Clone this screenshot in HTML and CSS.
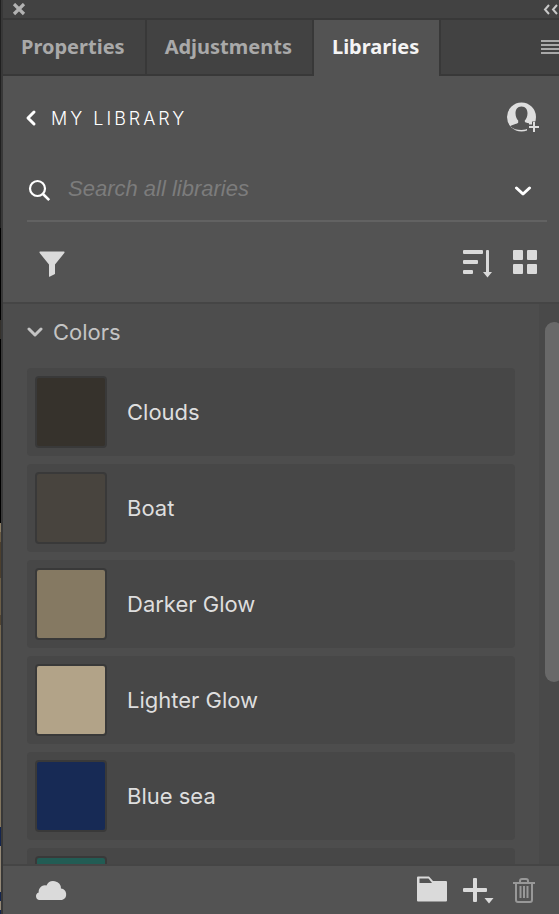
FILE: index.html
```html
<!DOCTYPE html>
<html lang="en">
<head>
<meta charset="utf-8">
<meta name="viewport" content="width=device-width, initial-scale=1">
<title>Libraries</title>
<link rel="stylesheet" href="styles.css">
</head>
<body>
<div class="workspace">
  <div class="canvas-edge"></div>
  <main class="panel">
    <div class="titlebar">
      <button class="icon-btn" type="button" aria-label="Close panel">
        <svg width="14" height="14" viewBox="0 0 14 14"><path d="M2 1l10 10M12 1L2 11" stroke="#b2b2b2" stroke-width="3.200" fill="none"/></svg>
      </button>
      <button class="icon-btn collapse" type="button" aria-label="Collapse panel">
        <svg width="16" height="12" viewBox="0 0 16 12"><path d="M6 1L2 5.500l4 4.500M14 1l-4 4.500 4 4.500" stroke="#c8c8c8" stroke-width="2" fill="none"/></svg>
      </button>
    </div>
    <nav class="tabs">
      <button class="tab" type="button">Properties</button>
      <button class="tab" type="button">Adjustments</button>
      <button class="tab tab-active" type="button">Libraries</button>
      <div class="tabs-rest">
        <button class="icon-btn" type="button" aria-label="Panel menu">
          <svg width="18" height="14" viewBox="0 0 18 14"><path d="M0 1h18M0 5h18M0 9h18M0 13h18" stroke="#a9a9a9" stroke-width="2"/></svg>
        </button>
      </div>
    </nav>
    <header class="library-head">
      <div class="library-row">
        <button class="back" type="button">
          <svg width="12" height="18" viewBox="0 0 12 18"><path d="M9 3L3 9l6 6" stroke="#fff" stroke-width="3" stroke-linecap="round" stroke-linejoin="round" fill="none"/></svg>
          <span>MY LIBRARY</span>
        </button>
        <button class="icon-btn" type="button" aria-label="Invite people">
          <svg width="34" height="32" viewBox="0 0 34 32">
            <circle cx="16.500" cy="15" r="14.500" fill="#dedede"/>
            <path d="M16.500 4.500c-4.200 0-6 3.200-6 6.800 0 3.200 1.200 5.700 2.700 7.300v1.800c0 1.400-5 1.600-8 3.800C8 27 12 28 16.500 28c3 0 5.400-.8 7.500-2.200v-4.500c-2.200-.6-4.200-.6-4.200-1.800v-1c1.500-1.600 2.700-4.100 2.700-7.300 0-3.600-1.800-6.700-6-6.700z" fill="#535353"/>
            <path d="M22 22.500h5v-3h5v12H22z" fill="#535353"/>
            <path d="M29 20v10M24 25h10" stroke="#dedede" stroke-width="2"/>
          </svg>
        </button>
      </div>
      <form class="search">
        <label for="library-search" aria-label="Search all libraries">
          <svg width="24" height="24" viewBox="0 0 24 24"><circle cx="10.500" cy="10.500" r="7.500" stroke="#fff" stroke-width="2.200" fill="none"/><path d="M16 16l6.200 6.200" stroke="#fff" stroke-width="2.600" fill="none"/></svg>
        </label>
        <input id="library-search" type="text" placeholder="Search all libraries">
        <button class="icon-btn" type="button" aria-label="Search scope">
          <svg width="18" height="12" viewBox="0 0 18 12"><path d="M2.500 4L9 10l6.500-6" stroke="#fff" stroke-width="3" stroke-linecap="round" stroke-linejoin="round" fill="none"/></svg>
        </button>
      </form>
      <div class="tools">
        <button class="icon-btn filter" type="button" aria-label="Filter">
          <svg width="26" height="26" viewBox="0 0 26 26"><path d="M.5 1Q.5.500 1 .500h24q.5 0 .5.500v.8L16 13.500v9.500l-5.500 2.700q-.5 0-.5-.5V13.500L.5 1.800z" fill="#dadada"/></svg>
        </button>
        <button class="icon-btn" type="button" aria-label="Sort">
          <svg width="30" height="28" viewBox="0 0 30 28" fill="#dadada"><rect x="0" y="0" width="20" height="4" rx="1"/><rect x="0" y="10" width="15" height="4" rx="1"/><rect x="0" y="20" width="10" height="4" rx="1"/><path d="M23 1q0-1 1-1h1q1 0 1 1v21h3l-4.500 5.500L20 22h3z"/></svg>
        </button>
        <button class="icon-btn" type="button" aria-label="Grid view">
          <svg width="24" height="28" viewBox="0 0 24 28" fill="#dadada"><rect width="10" height="10" rx="1"/><rect x="14" width="10" height="10" rx="1"/><rect y="14" width="10" height="10" rx="1"/><rect x="14" y="14" width="10" height="10" rx="1"/></svg>
        </button>
      </div>
    </header>
    <section class="assets">
      <div class="assets-list">
        <button class="group" type="button">
          <svg width="16" height="12" viewBox="0 0 16 12"><path d="M2 3l6 6 6-6" stroke="#c4c4c4" stroke-width="3" stroke-linecap="round" stroke-linejoin="round" fill="none"/></svg>
          <span>Colors</span>
        </button>
        <ul class="swatches">
          <li class="item"><span class="chip clouds"></span><span>Clouds</span></li>
          <li class="item"><span class="chip boat"></span><span>Boat</span></li>
          <li class="item"><span class="chip darker-glow"></span><span>Darker Glow</span></li>
          <li class="item"><span class="chip lighter-glow"></span><span>Lighter Glow</span></li>
          <li class="item"><span class="chip blue-sea"></span><span>Blue sea</span></li>
          <li class="item"><span class="chip teal"></span></li>
        </ul>
      </div>
      <div class="scroll-track"><div class="scroll-thumb"></div></div>
    </section>
    <footer class="actions">
      <button class="icon-btn sync" type="button" aria-label="Sync status">
        <svg width="32" height="20" viewBox="0 0 32 20"><path d="M4 20a3.900 3.900 0 0 1-.3-7.500A6.300 6.300 0 0 1 11.500 5.500 7.600 7.600 0 0 1 26 8.500a5.900 5.900 0 0 1 1 11.500z" fill="#dadada"/></svg>
      </button>
      <button class="icon-btn" type="button" aria-label="New group">
        <svg width="30" height="28" viewBox="0 0 30 28"><path d="M1 .500h11l4 4.500h13q1 0 1 1v18.500q0 1-1 1H1q-1 0-1-1v-23q0-1 1-1z" fill="#dadada"/><path d="M2.500 2.500h9L15 7H2.500z" fill="#535353"/></svg>
      </button>
      <button class="icon-btn add" type="button" aria-label="Add content">
        <svg width="32" height="28" viewBox="0 0 32 28" fill="#dadada"><rect x="1" y="12" width="24" height="4" rx="1"/><rect x="11" y="2" width="4" height="24" rx="1"/><path d="M22.500 22h9L27 27.500z"/></svg>
      </button>
      <button class="icon-btn" type="button" aria-label="Delete">
        <svg width="22" height="26" viewBox="0 0 22 26" fill="none" stroke="#989898" stroke-width="2"><path d="M0 6h22M7 5V4q0-2 2-2h4q2 0 2 2v1M3 6v17q0 2 2 2h12q2 0 2-2V6M7.500 9v12M11 9v12M14.500 9v12"/></svg>
      </button>
    </footer>
  </main>
</div>
</body>
</html>
```
FILE: styles.css
```css
* {
  box-sizing: border-box;
}

body {
  margin: 0;
  background: #535353;
  color: #dedede;
  font-family: Inter, "Liberation Sans", sans-serif;
}

button {
  margin: 0;
  padding: 0;
  border: 0;
  background: none;
  color: inherit;
  font: inherit;
}

svg {
  display: block;
}

.workspace {
  display: grid;
  grid-template-columns: 1px minmax(0, 1fr);
  height: 100vh;
}

/* Sliver of the open document beside the panel */
.canvas-edge {
  background: linear-gradient(
    #202020 228px, #000 228px 320px, #34312c 320px 339px, #000 339px 523px,
    #8c7e65 523px 532px, #6a5b43 532px 542px, #4c3f2d 542px 578px,
    #6b5d46 578px 615px, #514431 615px 625px, #766850 625px 760px,
    #83765f 760px 827px, #14254f 827px 846px, #958977 846px 892px,
    #14254f 892px 901px, #958977 901px 910px, #14254f 910px);
}

.panel {
  display: flex;
  flex-direction: column;
  min-width: 0;
  height: 100vh;
  border-left: 2px solid #383838;
  overflow: hidden;
}

.titlebar {
  display: flex;
  justify-content: space-between;
  height: 20px;
  padding: 1px 0 0 9px;
  border-bottom: 2px solid #383838;
  background: #424242;
}

.tabs {
  display: flex;
  height: 56px;
  background: #424242;
  font: 700 20px/24px "Noto Sans", sans-serif;
}

.tab {
  padding: 0 20px 0 18px;
  border-right: 2px solid #383838;
  border-bottom: 2px solid #383838;
  color: #a9a9a9;
}

.tab-active {
  padding-bottom: 2px;
  border-bottom: 0;
  background: #535353;
  color: #f4f4f4;
}

.tabs-rest {
  display: flex;
  flex: 1;
  justify-content: flex-end;
  align-items: center;
  border-bottom: 2px solid #383838;
}

.library-head {
  height: 228px;
  border-bottom: 2px solid #454545;
  background: #535353;
}

.library-row {
  display: flex;
  justify-content: space-between;
  align-items: center;
  height: 84px;
  padding: 0 20px 0 22px;
}

.back {
  display: flex;
  align-items: center;
  gap: 14px;
  color: #fff;
  font-size: 18px;
  font-weight: 300;
  letter-spacing: 3px;
}

.search {
  display: flex;
  align-items: center;
  height: 62px;
  margin: 0 12px 0 24px;
  padding-right: 15px;
  border-bottom: 2px solid #626262;
}

.search input {
  flex: 1;
  min-width: 0;
  margin-left: 17px;
  padding: 0 0 2px;
  border: 0;
  outline: 0;
  background: none;
  color: #fff;
  font: italic 22px/28px "Liberation Sans", sans-serif;
}

.search input::placeholder {
  color: #7c7c7c;
  opacity: 1;
}

.tools {
  display: flex;
  align-items: center;
  gap: 20px;
  height: 80px;
  padding: 4px 22px 0 36px;
}

.filter {
  margin-right: auto;
}

.assets {
  display: grid;
  flex: 1;
  grid-template-columns: minmax(0, 1fr) 20px;
  min-height: 0;
  overflow: hidden;
  background: #4d4d4d;
}

.assets-list {
  padding: 12px 24px 0;
}

.group {
  display: flex;
  align-items: center;
  gap: 10px;
  height: 32px;
  color: #c4c4c4;
  font-size: 22px;
}

.swatches {
  display: flex;
  flex-direction: column;
  gap: 8px;
  margin: 20px 0 0;
  padding: 0;
  list-style: none;
}

.item {
  display: flex;
  align-items: center;
  gap: 20px;
  height: 88px;
  padding: 0 8px;
  border-radius: 4px;
  background: #474747;
  font-size: 22px;
}

.chip {
  width: 72px;
  height: 72px;
  border: 2px solid #393939;
  border-radius: 4px;
}

.clouds { background: #36322c; }
.boat { background: #48443e; }
.darker-glow { background: #857962; }
.lighter-glow { background: #b2a388; }
.blue-sea { background: #172a55; }
.teal { background: #225c54; }

.scroll-track {
  padding: 18px 0 0 6px;
  background: #494949;
}

.scroll-thumb {
  width: 18px;
  height: 360px;
  border-radius: 9px;
  background: #696969;
}

.actions {
  display: flex;
  align-items: center;
  height: 50px;
  padding: 0 24px 0 32px;
  border-top: 2px solid #454545;
  background: #535353;
}

.sync {
  margin-right: auto;
}

.add {
  margin: 0 19px 0 15px;
}
```
